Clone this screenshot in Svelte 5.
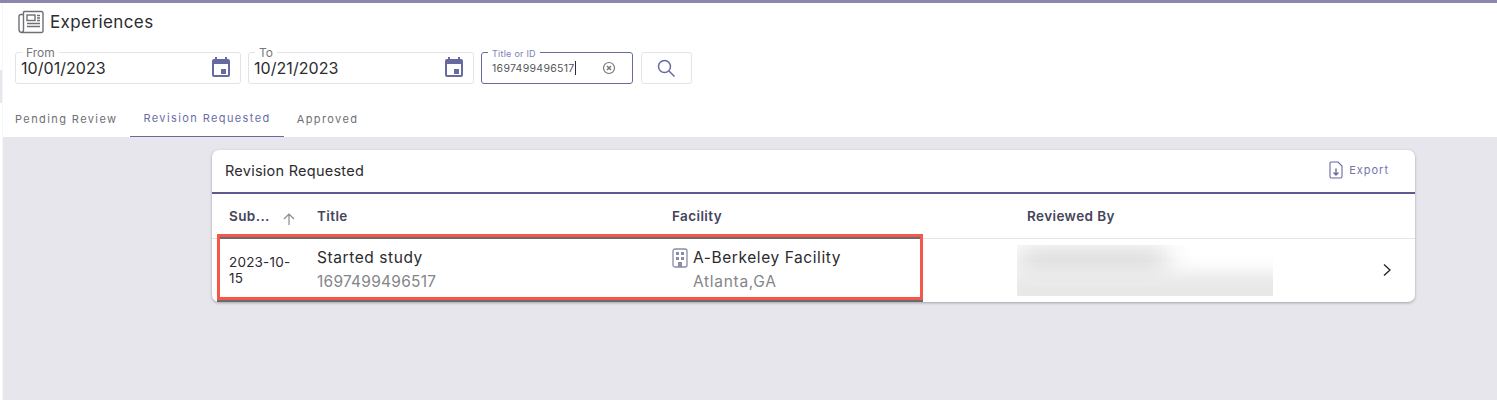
<script>
  const headers = ['Title', 'Facility', 'Reviewed By'];
</script>

<div class="page">
  <aside class="rail">
    <div class="railpatch"></div>
  </aside>
  <div class="content">
    <header class="top">
      <div class="title">
        <svg class="news" viewBox="0 0 26 24" width="26" height="24" fill="none" stroke="#6f6f74" stroke-width="1.4">
          <path d="M5.5 1.5h18a1.5 1.5 0 0 1 1.5 1.500v18a1.500 1.500 0 0 1-1.500 1.500H4a3 3 0 0 1-3-3V6.500a2 2 0 0 1 2-2h2.500" />
          <path d="M5.500 1.500v18.500a2.500 2.500 0 0 1-1.500 2.500" />
          <rect x="9" y="5" width="8" height="5.500" />
          <path d="M19 5.500h3M19 8h3M19 10.500h3M9 13.500h13M9 16.500h13" />
        </svg>
        <span>Experiences</span>
      </div>
      <div class="filters">
        <div class="field date from">
          <span class="legend">From</span>
          <span class="val">10/01/2023</span>
          <svg viewBox="0 0 24 24" width="24" height="24" fill="#676a9f"><path d="M19 3h-1V1h-2v2H8V1H6v2H5a2 2 0 0 0-2 2v14a2 2 0 0 0 2 2h14a2 2 0 0 0 2-2V5a2 2 0 0 0-2-2zm0 16H5V8h14v11z"/><rect x="12" y="13" width="5" height="5"/></svg>
        </div>
        <div class="field date to">
          <span class="legend">To</span>
          <span class="val">10/21/2023</span>
          <svg viewBox="0 0 24 24" width="24" height="24" fill="#676a9f"><path d="M19 3h-1V1h-2v2H8V1H6v2H5a2 2 0 0 0-2 2v14a2 2 0 0 0 2 2h14a2 2 0 0 0 2-2V5a2 2 0 0 0-2-2zm0 16H5V8h14v11z"/><rect x="12" y="13" width="5" height="5"/></svg>
        </div>
        <div class="field search">
          <span class="legend active">Title or ID</span>
          <span class="sval">1697499496517</span><span class="caret"></span>
          <svg class="clear" viewBox="0 0 14 14" width="14" height="14" fill="none" stroke="#77777c" stroke-width="1.200"><circle cx="7" cy="7" r="5.500"/><path d="M5 5l4 4M9 5l-4 4" stroke-width="1.500"/></svg>
        </div>
        <button class="go" aria-label="Search">
          <svg viewBox="0 0 20 20" width="20" height="20" fill="none" stroke="#676a9f" stroke-width="1.500"><circle cx="8.500" cy="8.500" r="6"/><path d="M13 13l5.500 5.500"/></svg>
        </button>
      </div>
      <nav class="tabs">
        <span class="tab">Pending Review</span>
        <span class="tab on">Revision Requested</span>
        <span class="tab">Approved</span>
      </nav>
    </header>

    <main class="body">
      <section class="card">
        <div class="cardhead">
          <span>Revision Requested</span>
          <span class="export">
            <svg viewBox="0 0 14 18" width="14" height="18" fill="none" stroke="#676a9f" stroke-width="1.100"><path d="M2 1h7l4 4v10.500a1.500 1.500 0 0 1-1.500 1.500h-9.500A1.500 1.500 0 0 1 1 15.500V2a1 1 0 0 1 1-1z"/><path d="M7 7.500v6M4.500 11.500L7 14l2.500-2.500" stroke-width="1.400"/></svg>
            Export
          </span>
        </div>
        <div class="row thead">
          <div class="c1 sub"><span>Sub...</span>
            <svg viewBox="0 0 14 14" width="14" height="14" fill="none" stroke="#8b8b8f" stroke-width="1.200"><path d="M7 13V2M2 7l5-5 5 5"/></svg>
          </div>
          {#each headers as h, i}
            <div class={'c' + (i + 2)}>{h}</div>
          {/each}
        </div>
        <div class="row tbody">
          <div class="c1 date-cell">2023-10-<br />15</div>
          <div class="c2">
            <div class="main">Started study</div>
            <div class="subt">1697499496517</div>
          </div>
          <div class="c3 fac">
            <svg viewBox="0 0 16 20" width="16" height="20" fill="none" stroke="#8b8ca8" stroke-width="1.300"><rect x="1" y="1" width="14" height="18" rx="2"/><g fill="#8b8ca8" stroke="none"><rect x="4" y="4" width="3" height="3"/><rect x="9" y="4" width="3" height="3"/><rect x="4" y="9" width="3" height="3"/><rect x="9" y="9" width="3" height="3"/><rect x="6" y="14" width="4" height="5"/></g></svg>
            <div>
              <div class="main">A-Berkeley Facility</div>
              <div class="subt loc">Atlanta,GA</div>
            </div>
          </div>
          <div class="c4"><div class="blur"><i></i><b></b></div></div>
          <svg class="chev" viewBox="0 0 10 14" width="10" height="14" fill="none" stroke="#222" stroke-width="1.300"><path d="M2 1.500L8 7l-6 5.500"/></svg>
          <div class="highlight"></div>
        </div>
      </section>
    </main>
  </div>
</div>

<style>
  :global(body) { margin: 0; background: #e7e6ed; }
  .page {
    height: 400px; overflow: hidden; display: flex; box-sizing: border-box;
    font-family: Inter, "Liberation Sans", sans-serif; color: #2b2b30;
    border-top: 3px solid #8c88ad;
  }
  .rail { width: 3px; flex: none; background: linear-gradient(to right, #fff 0, #fff 2px, #ececf0 3px); position: relative; }
  .railpatch { position: absolute; left: 0; top: 67px; width: 2px; height: 33px; background: #e7e6ed; }
  .content { flex: 1; display: flex; flex-direction: column; min-width: 0; }
  .top { background: #fff; height: 134px; box-sizing: border-box; padding: 7px 0 0 12px; }
  .title { display: flex; align-items: center; gap: 6px; font-size: 17px; height: 24px; letter-spacing: .4px; margin-left: 3px; }
  .filters { display: flex; align-items: stretch; margin-top: 18px; height: 32px; }
  .field { border: 1px solid #e4e4e8; border-radius: 3px; position: relative; box-sizing: border-box; display: flex; align-items: center; }
  .date { font-size: 16px; justify-content: space-between; padding: 0 7px 0 5px; }
  .from { width: 226px; margin-right: 7px; }
  .to { width: 226px; margin-right: 7px; }
  .val { letter-spacing: .05px; }
  .legend { position: absolute; left: 6px; top: -6px; background: #fff; padding: 0 4px; font-size: 12px; line-height: 12px; color: #77777c; }
  .legend.active { font-size: 9px; color: #7c7fb0; left: 6px; top: -4px; line-height: 9px; letter-spacing: .25px; }
  .search { width: 152px; border-color: #676a9f; padding-left: 10px; border-radius: 3px; margin-right: 8px; font-size: 10.500px; color: #55555a; letter-spacing: .3px; }
  .caret { width: 1px; height: 14px; background: #2b2b40; }
  .clear { position: absolute; left: 120px; top: 8px; }
  .go { width: 51px; border: 1px solid #e4e4e8; border-radius: 3px; background: #fff; padding: 0 2px 0 0; display: flex; align-items: center; justify-content: center; }
  .tabs { display: flex; margin-top: 20px; height: 33px; margin-left: -13px; }
  .tab { padding: 0 13px 4px; font-size: 11px; letter-spacing: 1.4px; color: #6f6f74; display: flex; align-items: center; height: 33px; box-sizing: border-box; white-space: nowrap; }
  .tab.on { color: #6a6da6; border-bottom: 1px solid #676a9f; }
  .body { flex: 1; padding: 13px 0 0 209px; }
  .card { width: 1203px; background: #fff; border-radius: 7px; box-shadow: 0 1px 3px #0000004d; height: 152px; }
  .cardhead { border-bottom: 2px solid #5d5a92; display: flex; justify-content: space-between; align-items: center; padding: 0 26px 2px 13px; box-sizing: border-box; height: 44px; font-size: 14.500px; letter-spacing: .25px; }
  .export { display: flex; align-items: center; gap: 6px; font-size: 11px; letter-spacing: 1px; color: #7275ab; }
  .row { display: grid; grid-template-columns: 105px 355px 355px 1fr; position: relative; }
  .thead { height: 45px; box-sizing: border-box; padding-bottom: 1px; align-items: center; font-weight: 600; font-size: 13.500px; color: #45455a; border-bottom: 1px solid #e4e4e8; letter-spacing: .4px; }
  .thead > div:first-child { padding-left: 17px; }
  .sub { display: flex; gap: 12px; align-items: center; }
  .sub svg { margin-top: 7px; }
  .tbody { height: 63px; align-items: center; }
  .date-cell { padding: 0 0 2px 17px; font-size: 13.500px; line-height: 16px; letter-spacing: .2px; }
  .main { font-size: 15.500px; line-height: 20px; margin-bottom: 2px; letter-spacing: .58px; white-space: nowrap; }
  .subt { font-size: 15.500px; line-height: 24px; color: #85858a; letter-spacing: .25px; }
  .subt.loc { letter-spacing: .7px; }
  .fac { display: flex; gap: 5px; align-items: flex-start; }
  .blur { width: 256px; height: 51px; margin-left: -10px; position: relative; background: #fff; overflow: hidden; }
  .blur i { position: absolute; left: 0; top: 4px; width: 150px; height: 24px; background: #d6d6d6; filter: blur(12px); }
  .blur b { position: absolute; left: -12px; top: 27px; width: 290px; height: 44px; background: #e8e8e8; filter: blur(9px); }
  .chev { position: absolute; right: 23px; top: 24px; }
  .highlight { position: absolute; left: 5px; top: -5px; width: 706px; height: 66px; box-sizing: border-box; border: 3.500px solid #f4584a; box-shadow: 0 2px 0 #6b6b6b, inset 0 2px 0 #6b6b6b; pointer-events: none; }
</style>
